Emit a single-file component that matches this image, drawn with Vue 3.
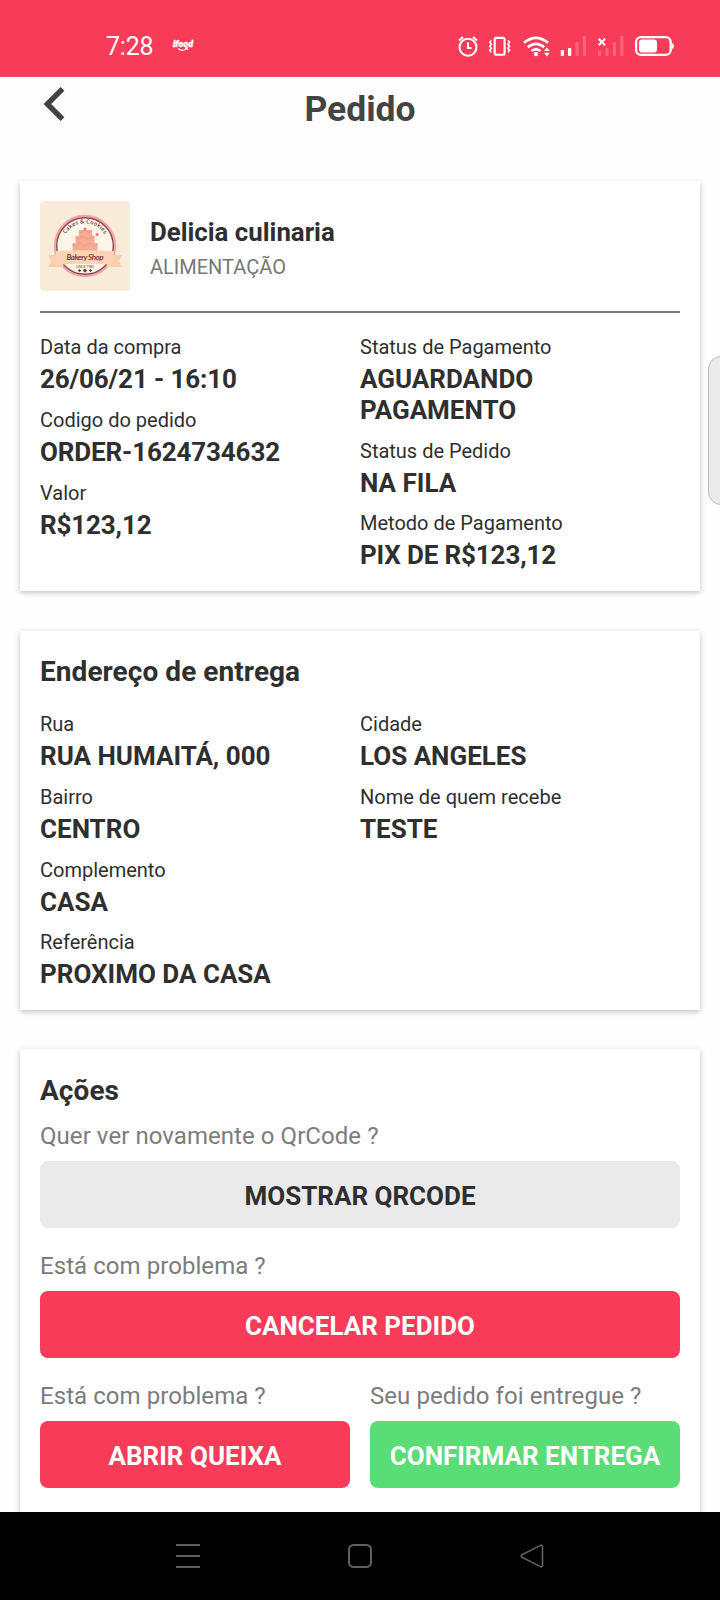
<script setup>
const purchase = [
  [
    { label: 'Data da compra', value: '26/06/21 - 16:10', tight: true },
    { label: 'Codigo do pedido', value: 'ORDER-1624734632', tight: true },
    { label: 'Valor', value: 'R$123,12', tight: true },
  ],
  [
    { label: 'Status de Pagamento', value: 'AGUARDANDO PAGAMENTO' },
    { label: 'Status de Pedido', value: 'NA FILA' },
    { label: 'Metodo de Pagamento', value: 'PIX DE R$123,12', tight: true },
  ],
]
const address = [
  [
    { label: 'Rua', value: 'RUA HUMAITÁ, 000' },
    { label: 'Bairro', value: 'CENTRO' },
    { label: 'Complemento', value: 'CASA' },
    { label: 'Referência', value: 'PROXIMO DA CASA' },
  ],
  [
    { label: 'Cidade', value: 'LOS ANGELES' },
    { label: 'Nome de quem recebe', value: 'TESTE' },
  ],
]
</script>

<template>
  <div class="screen">
    <header class="status">
      <span class="time">7:28</span>
      <svg class="ifood" width="24" height="18" viewBox="0 0 24 18">
        <text x="1" y="9.5" textLength="20" lengthAdjust="spacingAndGlyphs" class="ifood-text">ifood</text>
        <path d="M6 11.500Q11 15.500 15 10.800M13 10.900h2.400v2" fill="none" stroke="#fff" stroke-width="1.300" />
      </svg>
      <svg class="sys" width="225" height="32" viewBox="455 30 225 32" fill="none" stroke="#fff" stroke-width="2.100">
        <circle cx="468" cy="47.300" r="8.500" />
        <path d="M468 42.500v5.500h3.600M459 40.500l4-3.400M477 40.500l-4-3.400" />
        <rect x="494.700" y="37.900" width="9.900" height="16.800" rx="1.500" />
        <path d="M491.300 40.500l-1.500 1.700 1.500 2-1.500 2 1.500 2-1.500 2 1.500 2M508 40.500l1.500 1.700-1.500 2 1.500 2-1.500 2 1.500 2-1.500 2" stroke-width="1.700" />
        <path d="M524 42.800Q536 32.800 548 42.800M527.800 47.200Q536 40.400 544.200 47.200M531.600 51Q536 47.600 540.400 51" stroke-width="2.600" />
        <circle cx="536" cy="54" r="2.200" fill="#fff" stroke="none" />
        <path d="M544 51l2.900-3.600 2.900 3.600zM544 52.800l2.900 3.600 2.900-3.600z" fill="#fff" stroke="none" />
        <g fill="#fff" stroke="none">
          <rect x="560.700" y="50" width="3.300" height="6" rx="0.800" />
          <rect x="568" y="48" width="3.300" height="8" rx="0.800" />
          <g fill-opacity="0.200">
            <rect x="575.400" y="42.200" width="3.300" height="13.800" rx="0.800" />
            <rect x="582.800" y="35.800" width="3.300" height="20.200" rx="0.800" />
            <rect x="598" y="50.500" width="3.200" height="5.500" rx="0.800" />
            <rect x="605.400" y="48" width="3.200" height="8" rx="0.800" />
            <rect x="612.800" y="42.200" width="3.200" height="13.800" rx="0.800" />
            <rect x="620.200" y="35.800" width="3.200" height="20.200" rx="0.800" />
          </g>
        </g>
        <path d="M598.700 38.700l6.400 6.600M605.100 38.700l-6.400 6.600" stroke-width="2" />
        <rect x="636.100" y="37.100" width="34.600" height="17.800" rx="5" stroke-width="2.300" />
        <rect x="639" y="39.500" width="18" height="13" rx="3" fill="#fff" stroke="none" />
        <path d="M671.800 43q2.200 .5 2.200 3.200t-2.200 3.200z" fill="#fff" stroke="none" />
      </svg>
    </header>

    <main class="content">
      <div class="title-bar">
        <svg class="back" width="22" height="36" viewBox="0 0 22 36">
          <path d="M19.500 2.800L4.300 18L19.500 33.200" fill="none" stroke="#414141" stroke-width="5.400" />
        </svg>
        <h1>Pedido</h1>
      </div>

      <section class="card order">
        <div class="shop">
          <svg class="logo" width="90" height="90" viewBox="0 0 90 90">
            <defs>
              <path id="logo-arc" d="M22.300 45A22.700 22.700 0 0 1 67.700 45" />
            </defs>
            <rect width="90" height="90" rx="4" fill="#f8ecd8" />
            <circle cx="45" cy="45" r="30" fill="#fdf5e8" stroke="#efa5a9" stroke-width="2.400" />
            <circle cx="45" cy="45" r="28.300" fill="none" stroke="#8b4a50" stroke-width="1.400" />
            <text class="arc-text"><textPath href="#logo-arc" startOffset="50%" text-anchor="middle" textLength="46">Cakes &amp; Cookies</textPath></text>
            <g fill="#f6ad8c">
              <rect x="39" y="29" width="13" height="6" rx="1" />
              <rect x="35.500" y="35" width="19" height="7" rx="1" />
              <rect x="32.500" y="42" width="25" height="8" rx="1" />
            </g>
            <path d="M39 30.500q2 2 4 0t4 0 5 0M35.500 36.500q2.500 2.500 5 0t5 0 4.500 0 4.500 0M32.500 43.500q2.500 3 5 0t5 0 5 0 5 0 5 0" fill="none" stroke="#f29ba0" stroke-width="1.500" />
            <circle cx="45" cy="28" r="1.500" fill="#ee7b83" />
            <circle cx="57" cy="33.500" r="1.500" fill="#e9737d" />
            <path d="M8 54h15v12H8l3-6zM82 54H67v12h15l-3-6z" fill="#f9cfb0" />
            <path d="M16 50Q45 48.500 74 50V64Q45 61.500 16 64z" fill="#fbd3b4" />
            <text x="45" y="59" text-anchor="middle" textLength="37" class="shop-text">Bakery Shop</text>
            <text x="45" y="67" text-anchor="middle" textLength="18" class="since-text">SINCE 1980</text>
            <path d="M39.500 68l1.600 1.600-1.600 1.600-1.600-1.600zM45 67.500l2.100 2.100-2.100 2.100-2.100-2.100zM50.500 68l1.600 1.600-1.600 1.600-1.600-1.600z" fill="#63373c" />
          </svg>
          <div class="shop-info">
            <h2 class="shop-name">Delicia culinaria</h2>
            <p class="shop-kind">ALIMENTAÇÃO</p>
          </div>
        </div>
        <div class="columns">
          <div v-for="(col, i) in purchase" :key="i" class="column">
            <div v-for="item in col" :key="item.label" class="item">
              <p class="label">{{ item.label }}</p>
              <p class="value" :class="{ tight: item.tight }">{{ item.value }}</p>
            </div>
          </div>
        </div>
      </section>

      <section class="card address">
        <h2 class="heading">Endereço de entrega</h2>
        <div class="columns">
          <div v-for="(col, i) in address" :key="i" class="column">
            <div v-for="item in col" :key="item.label" class="item">
              <p class="label">{{ item.label }}</p>
              <p class="value">{{ item.value }}</p>
            </div>
          </div>
        </div>
      </section>

      <section class="card actions">
        <h2 class="heading">Ações</h2>
        <div class="action">
          <p class="question">Quer ver novamente o QrCode ?</p>
          <button class="btn grey">MOSTRAR QRCODE</button>
        </div>
        <div class="action">
          <p class="question">Está com problema ?</p>
          <button class="btn red">CANCELAR PEDIDO</button>
        </div>
        <div class="pair">
          <div class="action">
            <p class="question">Está com problema ?</p>
            <button class="btn red">ABRIR QUEIXA</button>
          </div>
          <div class="action">
            <p class="question">Seu pedido foi entregue ?</p>
            <button class="btn green">CONFIRMAR ENTREGA</button>
          </div>
        </div>
      </section>
    </main>

    <nav class="nav">
      <svg width="720" height="88" viewBox="0 0 720 88" fill="none" stroke="#606060" stroke-width="2">
        <path d="M176 33h24M176 44h24M176 55h24" />
        <rect x="349" y="33" width="22" height="22" rx="4.500" />
        <path d="M522 42.700L540.500 33.400Q542.500 32.500 542.500 35V53Q542.500 55.500 540.500 54.600L522 45.300Q520.500 44 522 42.700Z" stroke-width="1.600" />
      </svg>
    </nav>

    <div class="edge-handle"></div>
  </div>
</template>

<style>
body {
  margin: 0;
}
</style>

<style scoped>
.screen {
  position: relative;
  width: 720px;
  height: 1600px;
  overflow: hidden;
  display: flex;
  flex-direction: column;
  background: #fefefe;
  color: #2f2f2f;
  font-family: Roboto, "Liberation Sans", sans-serif;
}
h1,
h2,
p {
  margin: 0;
}
.status {
  flex: none;
  height: 77px;
  box-sizing: border-box;
  padding: 30px 40px 0 106px;
  display: flex;
  align-items: flex-start;
  background: #f73b59;
  border-bottom: 1px solid #e2506a;
  color: #fff;
}
.time {
  width: 66px;
  padding-top: 1px;
  font-size: 25px;
  line-height: 32px;
  letter-spacing: -0.2px;
  white-space: nowrap;
}
.ifood {
  margin-top: 7px;
}
.ifood-text {
  font: italic 900 9px Roboto, sans-serif;
  fill: #fff;
  stroke: #fff;
  stroke-width: 0.4px;
}
.sys {
  margin-left: auto;
}
.content {
  flex: 1;
  min-height: 0;
  overflow: hidden;
  display: flex;
  flex-direction: column;
}
.title-bar {
  flex: none;
  height: 104px;
  display: grid;
  grid-template-columns: 100px 1fr 100px;
  align-items: start;
}
.back {
  margin: 9px 0 0 43px;
}
h1 {
  padding-top: 11px;
  font-size: 35.5px;
  line-height: 42px;
  font-weight: 700;
  text-align: center;
  color: #444;
}
.card {
  flex: none;
  box-sizing: border-box;
  margin: 0 20px;
  padding: 0 20px;
  background: #fff;
  box-shadow: 0 2px 5px rgba(0, 0, 0, 0.2), 0 1px 8px rgba(0, 0, 0, 0.05);
}
.order {
  height: 410px;
}
.address {
  height: 379px;
  margin-top: 40px;
}
.actions {
  height: 520px;
  margin-top: 39px;
}
.shop {
  display: flex;
  gap: 20px;
  height: 110px;
  padding-top: 20px;
  box-sizing: content-box;
  border-bottom: 2px solid #787878;
}
.shop-info {
  padding-top: 15px;
}
.shop-name {
  font-size: 25.8px;
  line-height: 32px;
}
.shop-kind {
  margin-top: 7px;
  font-size: 20px;
  line-height: 24px;
  color: #777;
}
.columns {
  display: grid;
  grid-template-columns: 1fr 1fr;
}
.order .columns {
  padding-top: 22.4px;
}
.item {
  padding-bottom: 13.1px;
}
.label {
  margin-bottom: 5.1px;
  font-size: 20px;
  line-height: 24px;
}
.value {
  max-width: 250px;
  font-size: 26px;
  line-height: 30.5px;
  font-weight: 700;
}
.tight {
  letter-spacing: -0.14px;
}
.heading {
  font-size: 28px;
  line-height: 34px;
  padding-top: 24px;
  padding-bottom: 23.2px;
  letter-spacing: 0.06px;
}
.actions .heading {
  padding-top: 25px;
  padding-bottom: 14px;
}
.question {
  font-size: 24px;
  line-height: 28px;
  margin-bottom: 11px;
  letter-spacing: 0.06px;
  color: #7c7c7c;
  white-space: nowrap;
}
.action {
  height: 130px;
}
.btn {
  display: block;
  width: 100%;
  height: 67px;
  padding: 2px 0 0;
  border: 0;
  border-radius: 8px;
  font: 700 26px Roboto, "Liberation Sans", sans-serif;
  white-space: nowrap;
  color: #fff;
}
.grey {
  background: #eaeaea;
  color: #2f2f2f;
}
.red {
  background: #f73b59;
}
.green {
  background: #5adc77;
}
.pair {
  display: grid;
  grid-template-columns: 1fr 1fr;
  gap: 20px;
}
.nav {
  flex: none;
  height: 88px;
  background: #000;
}
.edge-handle {
  position: absolute;
  left: 708px;
  top: 356px;
  width: 30px;
  height: 147px;
  border: 1px solid #bdbdbd;
  border-radius: 13px;
  background: #ebebeb;
}
.arc-text {
  font: 600 5.6px "Open Sans", sans-serif;
  fill: #6b4145;
}
.shop-text {
  font: italic 700 8px Lato, sans-serif;
  fill: #7c3f45;
}
.since-text {
  font: 400 3.600px Roboto, sans-serif;
  fill: #7c4a4e;
}
</style>
